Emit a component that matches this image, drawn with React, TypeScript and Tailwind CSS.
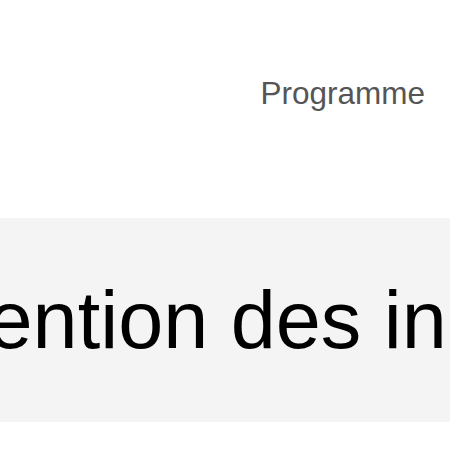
import React from "react";

const App: React.FC = () => {
    return (
        <div className="min-h-screen bg-white font-['Liberation_Sans',Arial,sans-serif] overflow-hidden">
            <header className="h-[187px] flex items-center justify-end pr-[25px]">
                <nav className="flex items-center gap-8">
                    <a href="#" className="text-[31.5px] text-[#555555] leading-none">Programme</a>
                </nav>
            </header>
            <section className="mt-[31px] h-[204px] bg-[#f4f4f4] flex items-center overflow-hidden">
                <h1 className="-ml-[179px] whitespace-nowrap text-[81px] leading-none text-black font-normal">
                    Prévention des incendies
                </h1>
            </section>
        </div>
    )
}

export default App;
